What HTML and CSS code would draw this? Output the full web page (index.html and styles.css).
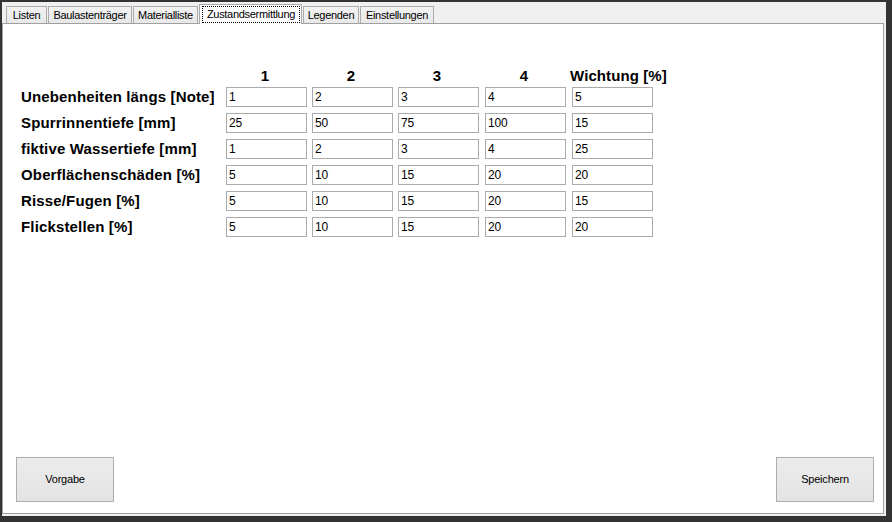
FILE: index.html
```html
<!DOCTYPE html>
<html lang="de">
<head>
<meta charset="utf-8">
<title>Zustandsermittlung</title>
<link rel="stylesheet" href="styles.css">
</head>
<body>
<div class="window">
  <div class="tabs">
    <div class="tab w-listen">Listen</div>
    <div class="tab w-baulast">Baulastenträger</div>
    <div class="tab w-material">Materialliste</div>
    <div class="tab tab-active w-zustand"><span class="focus">Zustandsermittlung</span></div>
    <div class="tab w-legenden">Legenden</div>
    <div class="tab w-einst">Einstellungen</div>
  </div>
  <div class="panel">
    <div class="grid">
      <div></div>
      <div class="head">1</div>
      <div class="head">2</div>
      <div class="head">3</div>
      <div class="head">4</div>
      <div class="head head-left">Wichtung [%]</div>

      <div class="label">Unebenheiten längs [Note]</div>
      <div class="field">1</div><div class="field">2</div><div class="field">3</div><div class="field">4</div><div class="field">5</div>

      <div class="label">Spurrinnentiefe [mm]</div>
      <div class="field">25</div><div class="field">50</div><div class="field">75</div><div class="field">100</div><div class="field">15</div>

      <div class="label">fiktive Wassertiefe [mm]</div>
      <div class="field">1</div><div class="field">2</div><div class="field">3</div><div class="field">4</div><div class="field">25</div>

      <div class="label">Oberflächenschäden [%]</div>
      <div class="field">5</div><div class="field">10</div><div class="field">15</div><div class="field">20</div><div class="field">20</div>

      <div class="label">Risse/Fugen [%]</div>
      <div class="field">5</div><div class="field">10</div><div class="field">15</div><div class="field">20</div><div class="field">15</div>

      <div class="label">Flickstellen [%]</div>
      <div class="field">5</div><div class="field">10</div><div class="field">15</div><div class="field">20</div><div class="field">20</div>
    </div>
    <div class="buttons">
      <div class="btn">Vorgabe</div>
      <div class="btn">Speichern</div>
    </div>
  </div>
</div>
</body>
</html>
```
FILE: styles.css
```css
html, body {
  margin: 0;
  padding: 0;
}
body {
  width: 892px;
  height: 522px;
  overflow: hidden;
  background: #333333;
  font-family: "Liberation Sans", Arial, sans-serif;
  color: #000;
}
.window {
  margin: 2px 6px 0 2px;
  height: 514px;
  box-sizing: border-box;
  padding: 0 2px 2px 0;
  background: #f0f0f0;
  display: flex;
  flex-direction: column;
}
.tabs {
  height: 21px;
  flex: none;
  display: flex;
  align-items: flex-end;
  padding-left: 4px;
  position: relative;
  z-index: 1;
}
.tab {
  box-sizing: border-box;
  height: 17px;
  margin-right: 1px;
  border: 1px solid #acacac;
  border-bottom: none;
  background: linear-gradient(#f2f2f2, #e8e8e8);
  font-size: 11px;
  letter-spacing: -0.3px;
  line-height: 16px;
  text-align: center;
  white-space: nowrap;
}
.w-listen { width: 41px; }
.w-baulast { width: 84px; }
.w-material { width: 65px; }
.w-zustand { width: 103px; }
.w-legenden { width: 56px; }
.w-einst { width: 74px; }
.tab-active {
  height: 20px;
  margin-bottom: -1px;
  background: #ffffff;
  padding: 1px 1px 1px 2px;
}
.focus {
  display: block;
  height: 17px;
  box-sizing: border-box;
  border: 1px dotted #000;
  line-height: 15px;
}
.panel {
  flex: 1;
  background: #ffffff;
  border: 1px solid #a0a0a0;
  display: flex;
  flex-direction: column;
  justify-content: space-between;
}
.grid {
  display: grid;
  grid-template-columns: 205px 86px 86px 87px 87px 81px;
  grid-template-rows: 12px repeat(6, 20px);
  row-gap: 6px;
  padding: 45px 0 0 18px;
}
.head {
  width: 78px;
  text-align: center;
  font-weight: bold;
  font-size: 15px;
  letter-spacing: 0.1px;
  line-height: 13px;
  white-space: nowrap;
}
.head-left {
  text-align: left;
  margin-left: -2px;
}
.label {
  font-weight: bold;
  font-size: 15px;
  letter-spacing: 0.15px;
  line-height: 20px;
  white-space: nowrap;
}
.field {
  width: 81px;
  height: 20px;
  box-sizing: border-box;
  border: 1px solid #ababab;
  padding-left: 2px;
  font-size: 12px;
  letter-spacing: -0.2px;
  line-height: 18px;
}
.buttons {
  display: flex;
  justify-content: space-between;
  padding: 0 9px 11px 13px;
}
.btn {
  width: 98px;
  height: 45px;
  box-sizing: border-box;
  border: 1px solid #adadad;
  background: linear-gradient(#ececec, #e3e3e3);
  font-size: 11px;
  letter-spacing: -0.2px;
  line-height: 43px;
  text-align: center;
}
```
